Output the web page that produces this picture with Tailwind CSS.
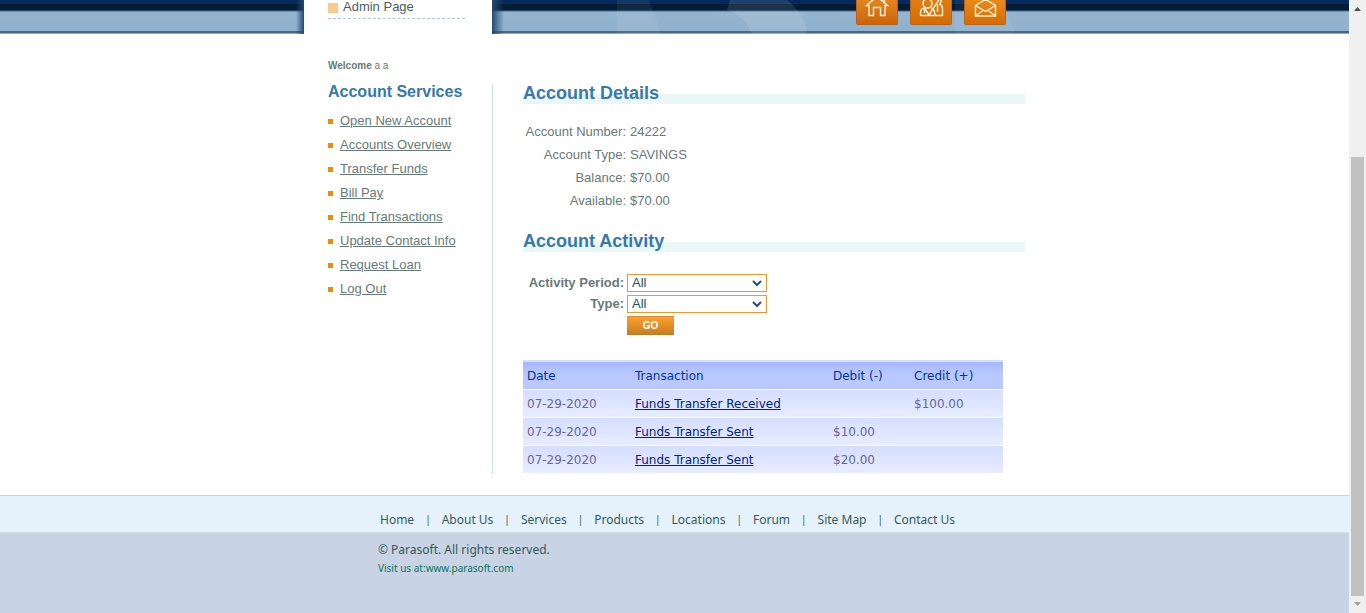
<!DOCTYPE html>
<html lang="en">
<head>
<meta charset="utf-8">
<title>ParaBank | Account Activity</title>
<script src="https://cdn.jsdelivr.net/npm/@tailwindcss/browser@4"></script>
</head>
<body class="bg-white">
<div class="flex min-h-screen font-['Liberation_Sans',Arial,sans-serif] text-[13px] text-[#667a77]">
  <div class="flex min-w-0 flex-1 flex-col">
    <header class="relative h-[34px] bg-[linear-gradient(#062a60_0_3px,#0a2e50_3px_4px,#021e34_4px_10px,#446c90_11px,#94b4d0_12px,#91b2ce_31px,#446786_31px_33px,#8eaac6_33px)]">
      <svg class="absolute inset-y-0 left-1/2 h-[34px] w-[400px] -translate-x-[60px]" viewBox="0 0 400 34" fill="#fff" aria-hidden="true">
        <path d="M2 0h32l12 34H2z" opacity=".06"/>
        <path d="M115 0h57q18 14 20 34h-55q-6-17-25-24z" opacity=".1"/>
        <path d="M340 0h48l12 34h-60z" opacity=".05"/>
      </svg>
      <div class="relative mx-auto flex max-w-[741px]">
        <div class="-ml-2 h-[34px] w-2 bg-linear-to-r from-transparent to-[#24496f]"></div>
        <div class="h-[54px] w-[188px] bg-white pr-[27px] pl-6">
          <div class="flex h-[19px] items-start gap-[5px] border-b border-dashed border-[#a8cccb] text-[#47605e]">
            <span class="mt-[3px] size-[10px] bg-[#f6ca8d]"></span>
            <a href="#" class="leading-[14px]">Admin Page</a>
          </div>
        </div>
        <div class="h-[34px] w-3 bg-linear-to-r from-[#24496f] to-transparent"></div>
        <nav class="mr-[39px] ml-auto flex gap-3" aria-label="Shortcuts">
          <a href="#" aria-label="Home" class="h-[25px] w-[42px] rounded-b-xs border border-t-0 border-[#b9631a] bg-linear-to-b from-[#e48320] to-[#ca6609]">
            <svg viewBox="0 0 40 24" class="h-6 w-10" fill="none" stroke="#fff0dc" stroke-width="1.4"><path d="M9.500 5.500 20-3.500l10.500 9H28v10h-4.500v-8h-7v8H12v-10zM25.500 1v-4h2v6"/></svg>
          </a>
          <a href="#" aria-label="About" class="h-[25px] w-[42px] rounded-b-xs border border-t-0 border-[#b9631a] bg-linear-to-b from-[#e07d13] to-[#d56c00]">
            <svg viewBox="0 0 40 24" class="h-6 w-10" fill="none" stroke="#fff0dc" stroke-width="1.4"><circle cx="16.500" cy="3.500" r="4.500"/><path d="M9.500 16v-4q.5-3.500 4-4l4.500 7L29-2M9.500 15.500h22V8.500q0-3-3-4.500M13.500 8.500V13M20 8q4 1 4 7.500M26.500 4v8M28.500-2q3 3 0 6"/></svg>
          </a>
          <a href="#" aria-label="Contact" class="h-[25px] w-[42px] rounded-b-xs border border-t-0 border-[#b9631a] bg-linear-to-b from-[#e98a18] to-[#d56c00]">
            <svg viewBox="0 0 40 24" class="h-6 w-10" fill="none" stroke="#fff0dc" stroke-width="1.4"><path d="M10.500 5.500 20.500-.5l10 6V16h-20zM10.500 5.500l10 6 10-6M10.500 16l8-6M30.500 16l-8-6"/></svg>
          </a>
        </nav>
      </div>
    </header>

    <main class="mx-auto flex w-full max-w-[741px] pt-[25px] pb-[22px] pl-6">
      <aside class="w-[164px]">
        <p class="text-[10px] leading-[14px] font-bold">Welcome <span class="font-normal">a a</span></p>
        <h2 class="mt-[9px] text-base leading-5 font-bold text-[#3878ab]">Account Services</h2>
        <ul class="mt-[7px] leading-6 text-[#667a77]">
          <li class="flex items-center gap-[7px]"><span class="size-[5px] bg-[#f08c00]"></span><a href="#" class="underline">Open New Account</a></li>
          <li class="flex items-center gap-[7px]"><span class="size-[5px] bg-[#f08c00]"></span><a href="#" class="underline">Accounts Overview</a></li>
          <li class="flex items-center gap-[7px]"><span class="size-[5px] bg-[#f08c00]"></span><a href="#" class="underline">Transfer Funds</a></li>
          <li class="flex items-center gap-[7px]"><span class="size-[5px] bg-[#f08c00]"></span><a href="#" class="underline">Bill Pay</a></li>
          <li class="flex items-center gap-[7px]"><span class="size-[5px] bg-[#f08c00]"></span><a href="#" class="underline">Find Transactions</a></li>
          <li class="flex items-center gap-[7px]"><span class="size-[5px] bg-[#f08c00]"></span><a href="#" class="underline">Update Contact Info</a></li>
          <li class="flex items-center gap-[7px]"><span class="size-[5px] bg-[#f08c00]"></span><a href="#" class="underline">Request Loan</a></li>
          <li class="flex items-center gap-[7px]"><span class="size-[5px] bg-[#f08c00]"></span><a href="#" class="underline">Log Out</a></li>
        </ul>
      </aside>
      <div class="mt-[25px] mr-5 min-w-0 flex-1 border-l border-[#c6e6dd] pl-[30px]">
        <h1 class="h-5 bg-[linear-gradient(transparent_50%,#e9f7f6_50%)] text-lg leading-[18px] font-bold text-[#3878ab]">Account Details</h1>
        <table class="mt-4 leading-[23px]">
          <tr><th scope="row" class="w-[103px] text-right font-normal">Account Number:</th><td class="pl-1">24222</td></tr>
          <tr><th scope="row" class="text-right font-normal">Account Type:</th><td class="pl-1">SAVINGS</td></tr>
          <tr><th scope="row" class="text-right font-normal">Balance:</th><td class="pl-1">$70.00</td></tr>
          <tr><th scope="row" class="text-right font-normal">Available:</th><td class="pl-1">$70.00</td></tr>
        </table>
        <h1 class="mt-5 h-5 bg-[linear-gradient(transparent_50%,#e9f7f6_50%)] text-lg leading-[18px] font-bold text-[#3878ab]">Account Activity</h1>
        <form class="mt-[22px] grid grid-cols-[101px_140px] items-center gap-[3px]">
          <label for="month" class="text-right leading-[18px] font-bold">Activity Period:</label>
          <div class="relative">
            <select id="month" class="block h-[18px] w-full appearance-none border border-[#f0962c] bg-white pl-1 leading-4 text-[#26505c]"><option>All</option></select>
            <svg class="pointer-events-none absolute top-1.5 right-[5px] h-[7px] w-[10px]" viewBox="0 0 10 7" fill="none" stroke="#2b4f6e" stroke-width="2"><path d="m1 1 4 4 4-4"/></svg>
          </div>
          <label for="type" class="text-right leading-[18px] font-bold">Type:</label>
          <div class="relative">
            <select id="type" class="block h-[18px] w-full appearance-none border border-[#f0962c] bg-white pl-1 leading-4 text-[#26505c]"><option>All</option></select>
            <svg class="pointer-events-none absolute top-1.5 right-[5px] h-[7px] w-[10px]" viewBox="0 0 10 7" fill="none" stroke="#2b4f6e" stroke-width="2"><path d="m1 1 4 4 4-4"/></svg>
          </div>
          <button type="submit" class="col-start-2 h-[19px] w-[47px] border-t border-[#d98a2c] bg-linear-to-b from-[#fda02f] to-[#c57c22] text-[10px] leading-4 font-bold text-white">GO</button>
        </form>
        <table class="mt-[25px] w-[480px] table-fixed border-separate border-spacing-0 font-['DejaVu_Sans',sans-serif] text-xs text-[#666699] [&_td]:h-7 [&_td]:border-b [&_td]:border-white [&_td]:px-1 [&_th]:h-[30px] [&_th]:border-t-2 [&_th]:border-b [&_th]:border-t-[#d3ddff] [&_th]:border-b-white [&_th]:px-1 [&_th]:font-normal">
          <thead>
            <tr class="bg-linear-to-b from-[#a3b5fb] to-[#b9c9fe] to-50% text-left text-[#003399]">
              <th scope="col" class="w-[108px]">Date</th><th scope="col" class="w-[198px]">Transaction</th><th scope="col" class="w-[81px]">Debit (-)</th><th scope="col">Credit (+)</th>
            </tr>
          </thead>
          <tbody>
            <tr class="bg-linear-to-b from-[#d5deff] to-[#e8edff]"><td>07-29-2020</td><td><a href="#" class="text-[#002288] underline">Funds Transfer Received</a></td><td></td><td>$100.00</td></tr>
            <tr class="bg-linear-to-b from-[#d5deff] to-[#e8edff]"><td>07-29-2020</td><td><a href="#" class="text-[#002288] underline">Funds Transfer Sent</a></td><td>$10.00</td><td></td></tr>
            <tr class="bg-linear-to-b from-[#d5deff] to-[#e8edff]"><td>07-29-2020</td><td><a href="#" class="text-[#002288] underline">Funds Transfer Sent</a></td><td>$20.00</td><td></td></tr>
          </tbody>
        </table>
      </div>
    </main>

    <footer class="-mt-px flex-1 bg-[#c8d4e3] font-['Noto_Sans',sans-serif] text-xs text-[#345a5c]">
      <div class="border-t border-[#c4d2e0] bg-[#e5f2fb]">
        <nav class="mx-auto flex h-9 w-full max-w-[741px] items-center gap-[11px] pt-3 pl-[76px] whitespace-nowrap [&_span]:text-[10px]" aria-label="Footer">
          <a href="#">Home</a><span>|</span><a href="#">About Us</a><span>|</span><a href="#">Services</a><span>|</span><a href="#">Products</a><span>|</span><a href="#">Locations</a><span>|</span><a href="#">Forum</a><span>|</span><a href="#">Site Map</a><span>|</span><a href="#">Contact Us</a>
        </nav>
      </div>
      <div class="border-t border-[#d3e0ea]">
        <div class="mx-auto w-full max-w-[741px] pt-2 pl-[74px]">
          <p class="leading-[18px]">© Parasoft. All rights reserved.</p>
          <p class="mt-px text-[10px] leading-4 text-[#087465]">Visit us at:<a href="#">www.parasoft.com</a></p>
        </div>
      </div>
    </footer>
  </div>

  <div class="flex w-[17px] flex-col items-center bg-[#f0f0f0]" aria-hidden="true">
    <svg class="mt-[7px] h-1 w-[7px]" viewBox="0 0 7 4" fill="#505050"><path d="M0 4 3.500 0 7 4z"/></svg>
    <div class="mt-[146px] mb-1.5 w-[13px] flex-1 bg-[#c1c1c1]"></div>
    <svg class="mb-[7px] h-1 w-[7px]" viewBox="0 0 7 4" fill="#a0a0a0"><path d="M0 0h7L3.500 4z"/></svg>
  </div>
</div>
</body>
</html>
